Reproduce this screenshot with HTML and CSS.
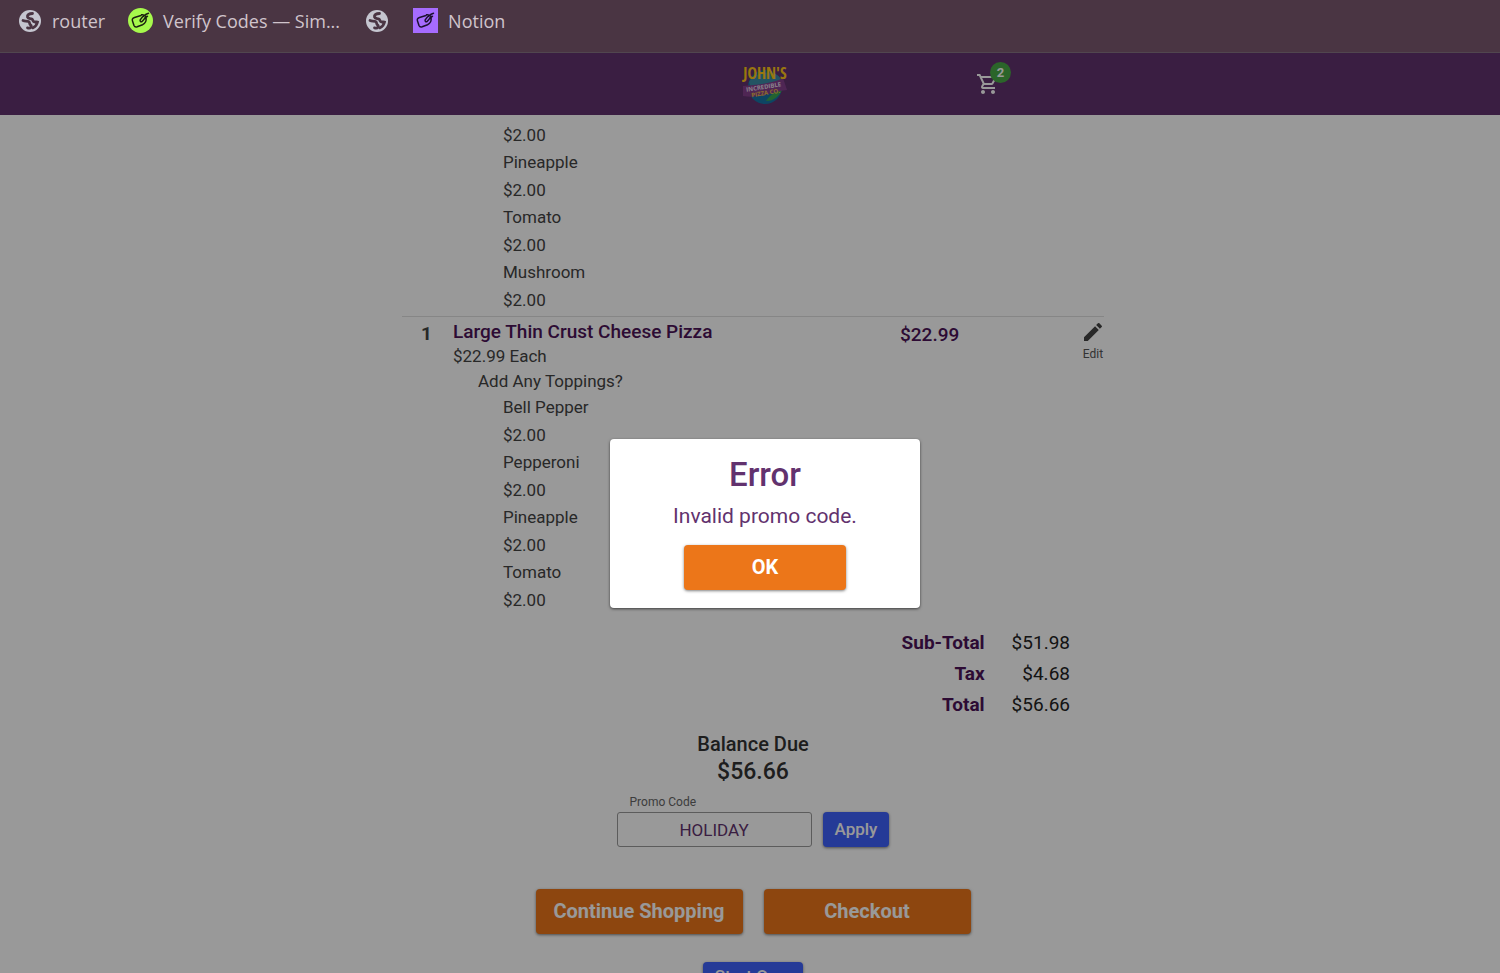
FILE: index.html
```html
<!DOCTYPE html>
<html lang="en">

<head>
    <meta charset="UTF-8">
    <meta name="viewport" content="width=device-width, initial-scale=1.0">
    <title>John's Pizza - Cart</title>
    <link rel="stylesheet" href="styles.css">
</head>

<body>

    <!-- icons used more than once -->
    <svg class="sprite" width="0" height="0">
        <symbol id="globe" viewBox="0 0 22 22">
            <circle cx="11" cy="11" r="11" fill="#c5c6d0"/>
            <path d="M13.500 3.500C10 3.500 8 5 8.500 7c.6 1.800 2.400 1.300 4 1.800 1.600.6 1 2.400 2.500 3 1.400.5 2.100-.2 3.500.3-.5 2.500-2 4.500-4.500 5.700" fill="none" stroke="#4a3543" stroke-width="2.800" stroke-linecap="round"/>
            <path d="M4 10.500c2 .9 3.500.2 5.500 1 1.700.8.6 2.300 2 3.300 1 .7 1 1.700.3 2.700-.7.800-2 .7-3.300.4" fill="none" stroke="#4a3543" stroke-width="2.800" stroke-linecap="round"/>
        </symbol>
        <symbol id="scribble" viewBox="0 0 25 25">
            <path d="M13 7.500 6.500 9.500C4.500 10.200 3.900 11.300 4.500 13l1.500 4.500c.6 1.500 1.700 1.800 3.200 1.300l5.300-2.100c3-1.300 4-3.600 3.600-6.500M20.500 5.200c-3.500 1-6.300 3.500-8.300 6.600-.5 1.700.8 2.500 2 1.500 1.700-1.300 2.700-3.300 3.800-5.200M13.500 6.800c1.500-.5 2.500.2 2.300 1.500M17 10.500l2.500-2.200" fill="none" stroke="currentColor" stroke-width="1.500" stroke-linecap="round" stroke-linejoin="round"/>
        </symbol>
    </svg>

    <nav class="bookmarks">
        <a href="#" class="bookmark">
            <svg class="globe"><use href="#globe"/></svg>
            router
        </a>
        <a href="#" class="bookmark">
            <svg class="site green"><use href="#scribble"/></svg>
            Verify Codes — Sim...
        </a>
        <a href="#" class="bookmark icon-only" aria-label="Bookmark">
            <svg class="globe"><use href="#globe"/></svg>
        </a>
        <a href="#" class="bookmark">
            <svg class="site purple"><use href="#scribble"/></svg>
            Notion
        </a>
    </nav>

    <div class="app">
        <header class="header">
            <a href="#" class="logo" aria-label="John's Pizza">
                <svg width="46" height="44" viewBox="0 0 46 44">
                    <circle cx="23" cy="25" r="17" fill="#1774a5"/>
                    <path d="M7 20C13 9 33 7 39 17L36 23 9 26z" fill="#3b8ca6"/>
                    <path d="M24 39c4-6 9-10 16-11-3 6-8 11-16 11z" fill="#3ba650"/>
                    <path d="M1 24C14 23 29 22 41 16l4 12C32 29 18 37 1 34z" fill="#84408d"/>
                    <text x="23" y="17" class="logo-name">JOHN'S</text>
                    <text x="22" y="27" class="logo-small" transform="rotate(-9 22 27)">INCREDIBLE</text>
                    <text x="24" y="33" class="logo-small gold" transform="rotate(-9 24 33)">PIZZA CO.</text>
                </svg>
            </a>
            <a href="#" class="cart" aria-label="Cart">
                <svg width="24" height="24" viewBox="0 0 24 24" fill="#fff">
                    <path d="M15.550 13c.75 0 1.410-.41 1.750-1.030l3.580-6.490A.996.996 0 0 0 20.010 4H5.210l-.94-2H1v2h2l3.600 7.590-1.350 2.440C4.520 15.370 5.480 17 7 17h12v-2H7l1.100-2h7.450zM6.160 6h12.150l-2.760 5H8.530L6.160 6zM7 18c-1.100 0-1.990.9-1.990 2S5.900 22 7 22s2-.9 2-2-.9-2-2-2zm10 0c-1.100 0-1.990.9-1.990 2s.89 2 1.990 2 2-.9 2-2-.9-2-2-2z"/>
                </svg>
                <span class="badge">2</span>
            </a>
        </header>

        <main class="order">
            <section class="item">
                <ul class="toppings">
                    <li class="price">$2.00</li>
                    <li>Pineapple</li>
                    <li class="price">$2.00</li>
                    <li>Tomato</li>
                    <li class="price">$2.00</li>
                    <li>Mushroom</li>
                    <li class="price">$2.00</li>
                </ul>
            </section>

            <section class="item">
                <div class="item-row">
                    <span class="qty">1</span>
                    <div class="item-info">
                        <h2>Large Thin Crust Cheese Pizza</h2>
                        <p>$22.99 Each</p>
                        <p class="question">Add Any Toppings?</p>
                    </div>
                    <span class="item-price">$22.99</span>
                    <button class="edit">
                        <svg width="24" height="24" viewBox="0 0 24 24" fill="#444">
                            <path d="M3 17.250V21h3.750L17.810 9.940l-3.750-3.750L3 17.250zM20.710 7.040a.996.996 0 0 0 0-1.410l-2.340-2.340a.996.996 0 0 0-1.410 0l-1.830 1.830 3.750 3.750 1.830-1.830z"/>
                        </svg>
                        Edit
                    </button>
                </div>
                <ul class="toppings">
                    <li>Bell Pepper</li>
                    <li class="price">$2.00</li>
                    <li>Pepperoni</li>
                    <li class="price">$2.00</li>
                    <li>Pineapple</li>
                    <li class="price">$2.00</li>
                    <li>Tomato</li>
                    <li class="price">$2.00</li>
                </ul>
            </section>

            <table class="totals">
                <tr><th scope="row">Sub-Total</th><td>$51.98</td></tr>
                <tr><th scope="row">Tax</th><td>$4.68</td></tr>
                <tr><th scope="row">Total</th><td>$56.66</td></tr>
            </table>

            <div class="balance">
                <div class="balance-label">Balance Due</div>
                <div class="balance-amount">$56.66</div>
            </div>

            <form class="promo">
                <div class="promo-field">
                    <label for="promo">Promo Code</label>
                    <input type="text" id="promo" value="HOLIDAY">
                </div>
                <button type="button" class="btn blue">Apply</button>
            </form>

            <div class="actions">
                <button class="btn orange">Continue Shopping</button>
                <button class="btn orange">Checkout</button>
            </div>

            <button class="btn blue start-over">Start Over</button>
        </main>

        <div class="overlay">
            <div class="dialog" role="alertdialog" aria-labelledby="dialogTitle">
                <h1 id="dialogTitle">Error</h1>
                <p>Invalid promo code.</p>
                <button class="btn orange">OK</button>
            </div>
        </div>
    </div>

</body>

</html>
```
FILE: styles.css
```css
* {
    box-sizing: border-box;
}

body {
    margin: 0;
    height: 100vh;
    display: flex;
    flex-direction: column;
    overflow: hidden;
    font-family: Roboto, Arial, sans-serif;
    font-size: 17px;
    color: #444;
}

h1, h2, p, ul {
    margin: 0;
    padding: 0;
    font-weight: 500;
}

a {
    color: inherit;
    text-decoration: none;
}

.sprite {
    position: absolute;
}

/* browser bookmarks */
.bookmarks {
    flex: none;
    display: flex;
    gap: 23px;
    height: 53px;
    padding: 0 18px;
    background-color: #4a3543;
    border-bottom: 1px solid #51464f;
    font-family: "Open Sans", "Noto Sans", sans-serif;
    font-size: 18px;
    color: #d0c4cc;
}

.bookmark {
    display: flex;
    align-items: center;
    gap: 10px;
    height: 41px;
}

.icon-only {
    padding: 0 1px 0 2px;
}

.globe {
    width: 24px;
    height: 22px;
}

.site {
    width: 25px;
    height: 25px;
    color: #1c2210;
}

.green {
    background-color: #a6f94c;
    border-radius: 50%;
}

.purple {
    background-color: #a66cff;
    color: #1c1230;
}

/* page */
.app {
    position: relative;
    flex: 1;
    min-height: 0;
    overflow: hidden;
    background-color: #fff;
}

.header {
    display: grid;
    grid-template-columns: 1fr auto 1fr;
    align-items: center;
    height: 62px;
    padding-left: 30px;
    background-color: #62326e;
}

.logo {
    grid-column: 2;
    display: flex;
}

.logo-name {
    font: bold 16px "Liberation Sans Narrow", "Open Sans Condensed", "Roboto Condensed", "DejaVu Sans Condensed", sans-serif;
    fill: #ffc61a;
    text-anchor: middle;
}

.logo-small {
    font: bold 6px "Open Sans", sans-serif;
    fill: #e5dcea;
    text-anchor: middle;
}

.gold {
    fill: #e8b84a;
}

.cart {
    position: relative;
    display: flex;
    width: 24px;
    margin-left: 188px;
}

.badge {
    position: absolute;
    top: -10px;
    left: 14px;
    width: 21px;
    height: 21px;
    border-radius: 50%;
    background-color: #49a847;
    color: #fff;
    font-size: 13px;
    font-weight: bold;
    line-height: 21px;
    text-align: center;
}

.order {
    display: flex;
    flex-direction: column;
    align-items: center;
    max-width: 708px;
    margin: 0 auto;
    padding: 6px 0 0 6px;
}

.item {
    width: 100%;
}

.item + .item {
    margin-top: 2px;
    padding-top: 3px;
    border-top: 1px solid #e0e0e0;
}

.toppings {
    padding-left: 101px;
    list-style: none;
    font-weight: 400;
    line-height: 27px;
}

.toppings .price {
    line-height: 28px;
}

.item-row {
    display: grid;
    grid-template-columns: 30px 1fr 182px 22px;
    line-height: 25px;
}

.qty {
    font-size: 19px;
    font-weight: bold;
    line-height: 27px;
    text-align: right;
}

.item-info {
    padding-left: 21px;
}

.item-info h2 {
    font-size: 19px;
    line-height: 24px;
    color: #4c1358;
}

.item-info p {
    font-weight: 400;
}

.item-info .question {
    padding-left: 25px;
}

.item-price {
    font-size: 19px;
    font-weight: 500;
    line-height: 30px;
    color: #4c1358;
}

.edit {
    display: flex;
    flex-direction: column;
    align-items: center;
    gap: 3px;
    height: 50px;
    padding: 0;
    border: none;
    background: none;
    font-family: inherit;
    font-size: 12px;
    color: #555;
}

.totals {
    align-self: flex-end;
    margin: 13px 34px 0 0;
    border-collapse: collapse;
    font-size: 19px;
    line-height: 31px;
    text-align: right;
    color: #222;
}

.totals th,
.totals td {
    padding: 0;
}

.totals th {
    padding-right: 27px;
    color: #4c1358;
}

.balance {
    margin-top: 12px;
    text-align: center;
    font-weight: 500;
    color: #333;
}

.balance-label {
    font-size: 20px;
    line-height: 25px;
}

.balance-amount {
    font-size: 23px;
    line-height: 29px;
}

.promo {
    display: flex;
    align-items: flex-end;
    gap: 11px;
    margin-top: 7px;
}

.promo-field {
    display: flex;
    flex-direction: column;
}

.promo label {
    padding-left: 13px;
    font-size: 12px;
    line-height: 19px;
    color: #666;
}

.promo input {
    width: 195px;
    height: 35px;
    border: 1px solid #999;
    border-radius: 3px;
    background-color: #fff;
    font-family: inherit;
    font-size: 17px;
    text-align: center;
    color: #62326e;
}

.actions {
    display: flex;
    gap: 21px;
    margin-top: 42px;
}

.btn {
    padding: 0 12px 2px;
    border: none;
    border-radius: 4px;
    font-family: inherit;
    color: #fff;
    box-shadow: 0 1px 3px rgba(0, 0, 0, 0.5);
    cursor: pointer;
}

.orange {
    width: 207px;
    height: 45px;
    background-color: #ec7619;
    font-size: 20px;
    font-weight: bold;
}

.blue {
    height: 35px;
    background-color: #3f61fc;
    font-size: 17px;
    font-weight: 500;
}

.start-over {
    height: 30px;
    margin-top: 28px;
}

/* error dialog */
.overlay {
    position: absolute;
    inset: 0;
    display: flex;
    align-items: center;
    justify-content: center;
    padding: 20px 0 0 30px;
    background-color: rgba(0, 0, 0, 0.4);
}

.dialog {
    width: 310px;
    padding: 16px 16px 18px;
    border-radius: 4px;
    background-color: #fff;
    box-shadow: 0 1px 3px rgba(0, 0, 0, 0.6);
    text-align: center;
    color: #62326e;
}

.dialog h1 {
    font-size: 33px;
    line-height: 40px;
}

.dialog p {
    margin: 6px 0 14px;
    font-size: 21px;
    font-weight: 400;
    line-height: 30px;
}

.dialog .btn {
    width: 162px;
    padding: 0;
}
```
